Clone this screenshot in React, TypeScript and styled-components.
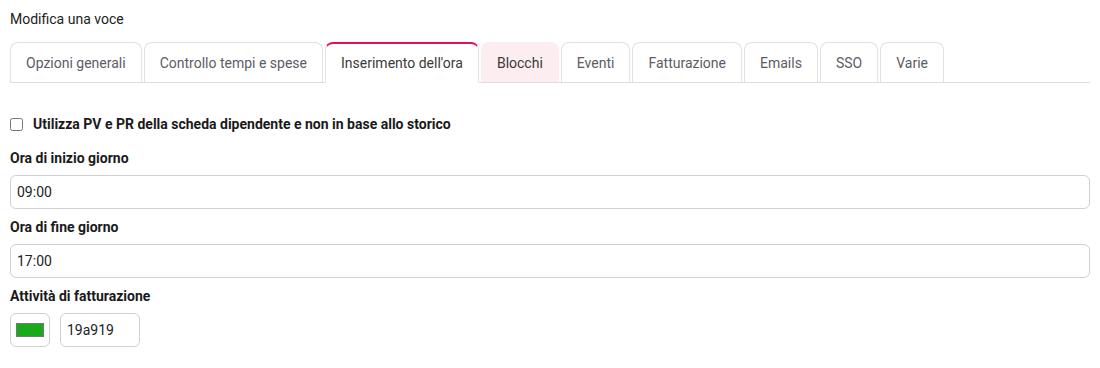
import React, { useState } from 'react'
import styled, { createGlobalStyle } from 'styled-components'

const GlobalStyle = createGlobalStyle`
  html, body {
    margin: 0;
    padding: 0;
    background: #fff;
    font-family: Roboto, "Liberation Sans", Arial, sans-serif;
    color: #212121;
  }
`

const Page = styled.div`
  padding: 10px 10px 10px 10px;
`

const Title = styled.div`
  font-size: 14px;
  line-height: 18px;
  color: #212121;
  margin-bottom: 14px;
`

const TabBar = styled.div`
  display: flex;
  gap: 2px;
  border-bottom: 1px solid #dedede;
  height: 40px;
`

const Tab = styled.div<{ $active?: boolean; $hover?: boolean }>`
  box-sizing: border-box;
  height: ${(p) => (p.$active ? '41px' : '40px')};
  padding: 0 15px;
  display: flex;
  align-items: center;
  font-size: 14px;
  font-weight: 400;
  color: ${(p) => (p.$active || p.$hover ? '#3a3a3a' : '#5c5c66')};
  background: ${(p) => (p.$hover ? '#fcedf1' : '#fff')};
  border: 1px solid ${(p) => (p.$hover ? '#fcedf1' : '#e2e2e2')};
  border-top: ${(p) => (p.$active ? '2px solid #e0105f' : p.$hover ? '1px solid #fcedf1' : '1px solid #e2e2e2')};
  border-bottom: ${(p) => (p.$active ? '1px solid #fff' : 'none')};
  border-radius: 8px 8px 0 0;
  padding-top: ${(p) => (p.$active ? '0' : '1px')};
  cursor: pointer;
`

const Body = styled.div`
  padding-top: 33px;
  display: flex;
  flex-direction: column;
`

const CheckRow = styled.label`
  display: flex;
  align-items: center;
  gap: 10px;
  font-size: 14px;
  font-weight: 700;
  color: #1a1a1a;
  height: 16px;
  margin-bottom: 18px;
`

const Check = styled.input`
  margin: 0;
  width: 13px;
  height: 13px;
`

const Label = styled.div`
  font-size: 14px;
  font-weight: 700;
  line-height: 16px;
  color: #1a1a1a;
  margin-bottom: 9px;
`

const TextInput = styled.input`
  box-sizing: border-box;
  width: 100%;
  height: 34px;
  border: 1px solid #cfcfd6;
  border-radius: 6px;
  padding: 0 6px;
  font-family: Roboto, "Liberation Sans", Arial, sans-serif;
  font-size: 14px;
  color: #222;
  margin-bottom: 10px;
  outline: none;
`

const ColorRow = styled.div`
  display: flex;
  gap: 10px;
`

const Swatch = styled.div`
  box-sizing: border-box;
  width: 40px;
  height: 34px;
  border: 1px solid #cfcfd6;
  border-radius: 6px;
  display: flex;
  align-items: center;
  justify-content: center;
`

const SwatchFill = styled.div<{ $color: string }>`
  width: 26px;
  height: 12px;
  background: ${(p) => p.$color};
  border: 1px solid #777;
`

const HexInput = styled(TextInput)`
  width: 80px;
  margin-bottom: 0;
  padding: 0 6px;
`

const tabs = [
  'Opzioni generali',
  'Controllo tempi e spese',
  "Inserimento dell'ora",
  'Blocchi',
  'Eventi',
  'Fatturazione',
  'Emails',
  'SSO',
  'Varie',
]

export default function App() {
  const [start, setStart] = useState('09:00')
  const [end, setEnd] = useState('17:00')
  const [hex, setHex] = useState('19a919')

  return (
    <Page>
      <GlobalStyle />
      <Title>Modifica una voce</Title>
      <TabBar>
        {tabs.map((t) => (
          <Tab key={t} $active={t === "Inserimento dell'ora"} $hover={t === 'Blocchi'}>
            {t}
          </Tab>
        ))}
      </TabBar>
      <Body>
        <CheckRow>
          <Check type="checkbox" />
          Utilizza PV e PR della scheda dipendente e non in base allo storico
        </CheckRow>
        <Label>Ora di inizio giorno</Label>
        <TextInput value={start} onChange={(e) => setStart(e.target.value)} />
        <Label>Ora di fine giorno</Label>
        <TextInput value={end} onChange={(e) => setEnd(e.target.value)} />
        <Label>Attività di fatturazione</Label>
        <ColorRow>
          <Swatch>
            <SwatchFill $color={'#' + hex} />
          </Swatch>
          <HexInput value={hex} onChange={(e) => setHex(e.target.value)} />
        </ColorRow>
      </Body>
    </Page>
  )
}
